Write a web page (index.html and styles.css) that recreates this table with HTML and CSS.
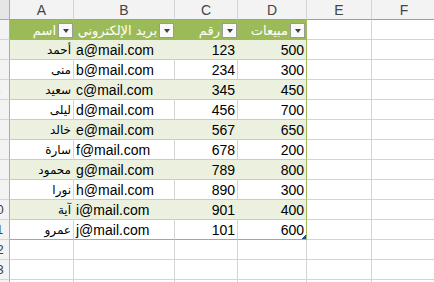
FILE: index.html
```html
<!DOCTYPE html>
<html lang="ar">
<head>
<meta charset="utf-8">
<link rel="stylesheet" href="styles.css">
</head>
<body>
<div class="sheet">
  <div class="corner"></div>
  <div class="colhead">A</div>
  <div class="colhead">B</div>
  <div class="colhead">C</div>
  <div class="colhead">D</div>
  <div class="colhead">E</div>
  <div class="colhead">F</div>

  <div class="rowhead"><span>1</span></div>
  <div class="th"><span class="label">اسم</span><span class="filter"></span></div>
  <div class="th"><span class="label">بريد الإلكتروني</span><span class="filter"></span></div>
  <div class="th"><span class="label">رقم</span><span class="filter"></span></div>
  <div class="th last"><span class="label">مبيعات</span><span class="filter"></span></div>
  <div class="cell"></div>
  <div class="cell"></div>

  <div class="rowhead"><span>2</span></div>
  <div class="td band name">أحمد</div><div class="td band mail">a@mail.com</div><div class="td band num">123</div><div class="td band num last">500</div>
  <div class="cell"></div><div class="cell"></div>

  <div class="rowhead"><span>3</span></div>
  <div class="td name">منى</div><div class="td mail">b@mail.com</div><div class="td num">234</div><div class="td num last">300</div>
  <div class="cell"></div><div class="cell"></div>

  <div class="rowhead"><span>4</span></div>
  <div class="td band name">سعيد</div><div class="td band mail">c@mail.com</div><div class="td band num">345</div><div class="td band num last">450</div>
  <div class="cell"></div><div class="cell"></div>

  <div class="rowhead"><span>5</span></div>
  <div class="td name">ليلى</div><div class="td mail">d@mail.com</div><div class="td num">456</div><div class="td num last">700</div>
  <div class="cell"></div><div class="cell"></div>

  <div class="rowhead"><span>6</span></div>
  <div class="td band name">خالد</div><div class="td band mail">e@mail.com</div><div class="td band num">567</div><div class="td band num last">650</div>
  <div class="cell"></div><div class="cell"></div>

  <div class="rowhead"><span>7</span></div>
  <div class="td name">سارة</div><div class="td mail">f@mail.com</div><div class="td num">678</div><div class="td num last">200</div>
  <div class="cell"></div><div class="cell"></div>

  <div class="rowhead"><span>8</span></div>
  <div class="td band name">محمود</div><div class="td band mail">g@mail.com</div><div class="td band num">789</div><div class="td band num last">800</div>
  <div class="cell"></div><div class="cell"></div>

  <div class="rowhead"><span>9</span></div>
  <div class="td name">نورا</div><div class="td mail">h@mail.com</div><div class="td num">890</div><div class="td num last">300</div>
  <div class="cell"></div><div class="cell"></div>

  <div class="rowhead"><span>10</span></div>
  <div class="td band name">آية</div><div class="td band mail">i@mail.com</div><div class="td band num">901</div><div class="td band num last">400</div>
  <div class="cell"></div><div class="cell"></div>

  <div class="rowhead"><span>11</span></div>
  <div class="td name bottom">عمرو</div><div class="td mail bottom">j@mail.com</div><div class="td num bottom">101</div><div class="td num last bottom">600<span class="handle"></span></div>
  <div class="cell"></div><div class="cell"></div>

  <div class="rowhead"><span>12</span></div>
  <div class="cell"></div><div class="cell"></div><div class="cell"></div><div class="cell"></div><div class="cell"></div><div class="cell"></div>

  <div class="rowhead"><span>13</span></div>
  <div class="cell"></div><div class="cell"></div><div class="cell"></div><div class="cell"></div><div class="cell"></div><div class="cell"></div>

  <div class="rowhead"><span>14</span></div>
  <div class="cell"></div><div class="cell"></div><div class="cell"></div><div class="cell"></div><div class="cell"></div><div class="cell"></div>
</div>
</body>
</html>
```
FILE: styles.css
```css
* { box-sizing: border-box; }
html, body { margin: 0; padding: 0; background: #fff; overflow: hidden; }
body { width: 434px; height: 282px; }

.sheet {
  display: grid;
  grid-template-columns: 10px 64px 101px 63px 69px 65px 65px;
  grid-auto-rows: 20px;
  font-family: "Liberation Sans", "DejaVu Sans", sans-serif;
  font-size: 14px;
  color: #000;
}

.corner {
  background: #e6e6e6;
  border-right: 1px solid #ababab;
  border-bottom: 1px solid #ababab;
}

.colhead {
  background: #f3f3f3;
  color: #444;
  font-size: 14px;
  display: flex;
  align-items: center;
  justify-content: center;
  border-right: 1px solid #d5d5d5;
  border-bottom: 1px solid #9e9e9e;
  padding-top: 1px;
}

.rowhead {
  background: #f3f3f3;
  border-right: 1px solid #ababab;
  border-bottom: 1px solid #d5d5d5;
  overflow: hidden;
  color: #444;
  font-size: 13px;
}
.rowhead span {
  display: flex;
  width: 21px;
  height: 100%;
  margin-left: -14px;
  align-items: center;
  justify-content: center;
}

.cell {
  border-right: 1px solid #d4d4d4;
  border-bottom: 1px solid #d4d4d4;
}

.th {
  background: #9bbb59;
  color: #fff;
  display: flex;
  align-items: center;
  justify-content: flex-end;
  overflow: hidden;
  white-space: nowrap;
  padding-right: 1px;
}
.th .label {
  direction: rtl;
  padding-right: 2px;
  flex-shrink: 0;
  font-family: "DejaVu Sans", sans-serif;
  font-size: 13px;
}
.th.last { border-right: 1px solid #9bbb59; }

.filter {
  flex-shrink: 0;
  width: 15px;
  height: 15px;
  background: #fafafa;
  border: 1px solid #9a9a9a;
  position: relative;
}
.filter::after {
  content: "";
  position: absolute;
  left: 4px;
  top: 5px;
  border-left: 3px solid transparent;
  border-right: 3px solid transparent;
  border-top: 4px solid #404040;
}

.td {
  display: flex;
  align-items: center;
  white-space: nowrap;
  overflow: hidden;
  border-right: 1px solid #d4d4d4;
  border-bottom: 1px solid #c4d79b;
  padding: 1px 2px 0 2px;
}
.td.band { background: #ebf1de; border-right-color: #ebf1de; }
.td.last { border-right: 1px solid #9bbb59; position: relative; overflow: visible; }
.td.bottom { border-bottom: 1px solid #9bbb59; }
.td.name {
  justify-content: flex-end;
  font-family: "DejaVu Sans", sans-serif;
  font-size: 12px;
  unicode-bidi: plaintext;
}
.td.mail { justify-content: flex-start; }
.td.num { justify-content: flex-end; }

.handle {
  position: absolute;
  right: 0;
  bottom: 0;
  width: 4px;
  height: 4px;
  background: linear-gradient(135deg, transparent 45%, #1f4e99 46%);
}
```
